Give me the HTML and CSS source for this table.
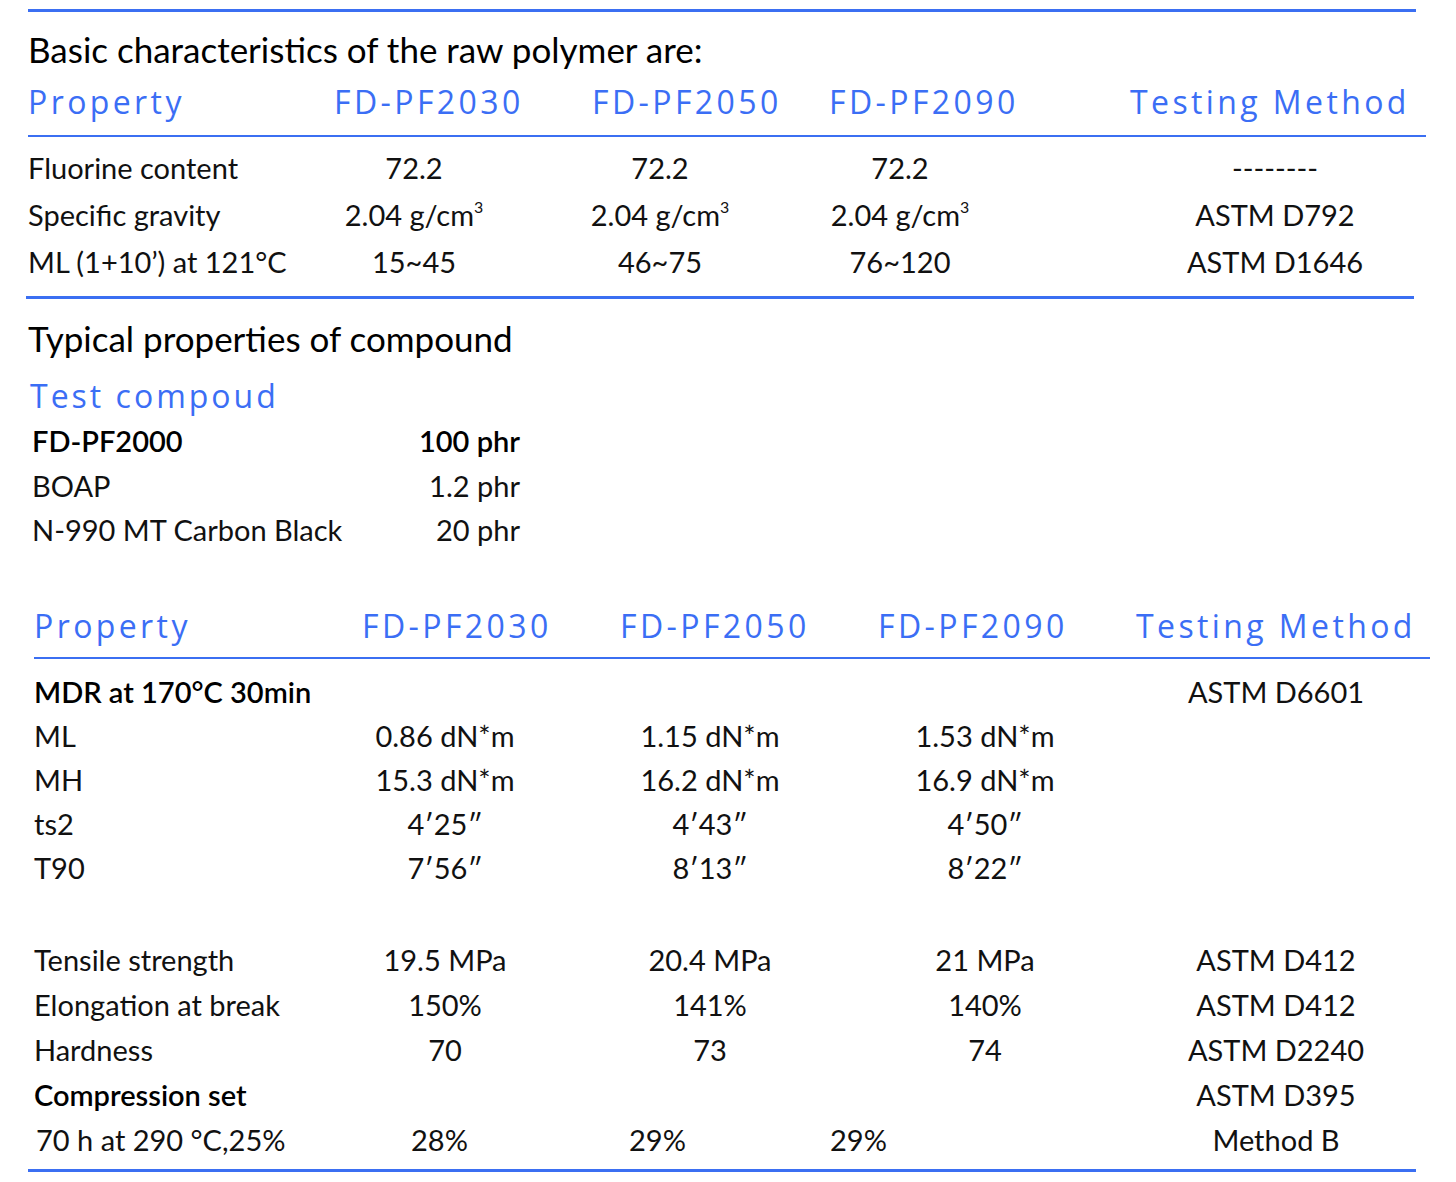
FILE: index.html
```html
<!DOCTYPE html>
<html lang="en">
<head>
<meta charset="utf-8">
<title>FD-PF2000 properties</title>
<link rel="stylesheet" href="styles.css">
</head>
<body>
<main class="sheet">
  <div class="rule rule-top"></div>

  <section class="raw">
    <h2 class="title title-raw">Basic characteristics of the raw polymer are:</h2>
    <div class="thead thead-raw">
      <span>Property</span><span>FD-PF2030</span><span>FD-PF2050</span><span>FD-PF2090</span><span>Testing Method</span>
    </div>
    <div class="rule rule-head-raw"></div>
    <div class="tbody tbody-raw">
      <div class="row row-raw"><span class="lbl">Fluorine content</span><span>72.2</span><span>72.2</span><span>72.2</span><span class="m">--------</span></div>
      <div class="row row-raw"><span class="lbl">Specific gravity</span><span>2.04 g/cm<sup>3</sup></span><span>2.04 g/cm<sup>3</sup></span><span>2.04 g/cm<sup>3</sup></span><span class="m">ASTM D792</span></div>
      <div class="row row-raw"><span class="lbl">ML (1+10’) at 121°C</span><span>15~45</span><span>46~75</span><span>76~120</span><span class="m">ASTM D1646</span></div>
    </div>
    <div class="rule rule-bottom-raw"></div>
  </section>

  <section class="compound">
    <h2 class="title title-typ">Typical properties of compound</h2>
    <h3 class="sub">Test compoud</h3>
    <div class="recipe">
      <div class="recipe-row strong"><span>FD-PF2000</span><span>100 phr</span></div>
      <div class="recipe-row"><span>BOAP</span><span>1.2 phr</span></div>
      <div class="recipe-row"><span>N-990 MT Carbon Black</span><span>20 phr</span></div>
    </div>
  </section>

  <section class="cured">
    <div class="thead thead-cured">
      <span>Property</span><span>FD-PF2030</span><span>FD-PF2050</span><span>FD-PF2090</span><span>Testing Method</span>
    </div>
    <div class="rule rule-head-cured"></div>
    <div class="tbody tbody-mdr">
      <div class="row row-cured"><span class="lbl strong">MDR at 170°C 30min</span><span></span><span></span><span></span><span class="m">ASTM D6601</span></div>
      <div class="row row-cured"><span class="lbl">ML</span><span>0.86 dN*m</span><span>1.15 dN*m</span><span>1.53 dN*m</span><span class="m"></span></div>
      <div class="row row-cured"><span class="lbl">MH</span><span>15.3 dN*m</span><span>16.2 dN*m</span><span>16.9 dN*m</span><span class="m"></span></div>
      <div class="row row-cured"><span class="lbl">ts2</span><span>4′25″</span><span>4′43″</span><span>4′50″</span><span class="m"></span></div>
      <div class="row row-cured"><span class="lbl">T90</span><span>7′56″</span><span>8′13″</span><span>8′22″</span><span class="m"></span></div>
    </div>
    <div class="tbody tbody-phys">
      <div class="row row-cured"><span class="lbl">Tensile strength</span><span>19.5 MPa</span><span>20.4 MPa</span><span>21 MPa</span><span class="m">ASTM D412</span></div>
      <div class="row row-cured"><span class="lbl">Elongation at break</span><span>150%</span><span>141%</span><span>140%</span><span class="m">ASTM D412</span></div>
      <div class="row row-cured"><span class="lbl">Hardness</span><span>70</span><span>73</span><span>74</span><span class="m">ASTM D2240</span></div>
      <div class="row row-cured"><span class="lbl strong">Compression set</span><span></span><span></span><span></span><span class="m">ASTM D395</span></div>
      <div class="row row-cs"><span class="lbl">70 h at 290 °C,25%</span><span>28%</span><span>29%</span><span>29%</span><span class="m">Method B</span></div>
    </div>
    <div class="rule rule-bottom"></div>
  </section>
</main>
</body>
</html>
```

FILE: styles.css
```css
* { box-sizing: border-box; }

html, body {
  margin: 0;
  padding: 0;
  background: #ffffff;
}

body {
  font-family: Lato, "Open Sans", "Liberation Sans", sans-serif;
  color: #111111;
  width: 1456px;
  overflow: hidden;
}

.sheet {
  padding: 9px 0 0 0;
}

h2, h3 { margin: 0; font-weight: 400; }

.rule {
  background: #3b6ff2;
}

.rule-top {
  height: 3px;
  margin: 0 40px 0 28px;
}

.title {
  font-family: Lato, "Open Sans", sans-serif;
  font-size: 35px;
  line-height: 40px;
  height: 40px;
  color: #000000;
  padding-left: 28px;
}

.title-raw { margin-top: 17px; }

.thead {
  display: grid;
  font-family: "Open Sans", "Noto Sans", sans-serif;
  font-size: 32px;
  line-height: 40px;
  height: 40px;
  letter-spacing: 3.4px;
  color: #3b6ef5;
  white-space: nowrap;
}

.thead-raw {
  margin-top: 13px;
  padding-left: 28px;
  grid-template-columns: 306px 258px 237px 301px auto;
}

.rule-head-raw {
  height: 2px;
  margin: 13px 30px 0 28px;
}

.tbody { font-size: 29px; }

.row {
  display: grid;
  white-space: nowrap;
}

.row > span { text-align: center; }
.row > span.lbl { text-align: left; }

.tbody-raw { margin-top: 7px; }

.row-raw {
  height: 47px;
  line-height: 47px;
  padding-left: 28px;
  grid-template-columns: 286px 200px 292px 188px 434px;
}

.row-raw > .m { padding-left: 128px; }

sup {
  font-size: 0.55em;
  line-height: 0;
  vertical-align: 0.8em;
}

.rule-bottom-raw {
  height: 3px;
  margin: 11px 42px 0 26px;
}

.title-typ { margin-top: 19px; }

.sub {
  font-family: "Open Sans", "Noto Sans", sans-serif;
  font-size: 32px;
  line-height: 40px;
  height: 40px;
  letter-spacing: 3px;
  color: #3b6ef5;
  padding-left: 30px;
  margin-top: 18px;
}

.recipe {
  margin-top: 3px;
  padding-left: 32px;
  font-size: 29px;
}

.recipe-row {
  display: grid;
  grid-template-columns: 320px 168px;
  height: 44.5px;
  line-height: 44.5px;
}

.recipe-row > span:last-child { text-align: right; }

.strong { font-weight: 600; color: #000000; }

.thead-cured {
  margin-top: 53px;
  padding-left: 34px;
  grid-template-columns: 328px 258px 258px 258px auto;
}

.rule-head-cured {
  height: 2px;
  margin: 11px 26px 0 34px;
}

.tbody-mdr { margin-top: 11px; }

.row-cured,
.row-cs {
  padding-left: 34px;
  height: 44px;
  line-height: 44px;
  grid-template-columns: 301px 220px 310px 240px 342px;
}

.tbody-phys { margin-top: 47px; }

.tbody-phys .row-cured,
.tbody-phys .row-cs {
  height: 45px;
  line-height: 45px;
}

.row-cs {
  padding-left: 36px;
  grid-template-columns: 375px 218px 201px 275px 342px;
}

.row-cs > span { text-align: left; }
.row-cs > span.m { text-align: center; }

.rule-bottom {
  height: 3px;
  margin: 7px 40px 0 28px;
}
```
